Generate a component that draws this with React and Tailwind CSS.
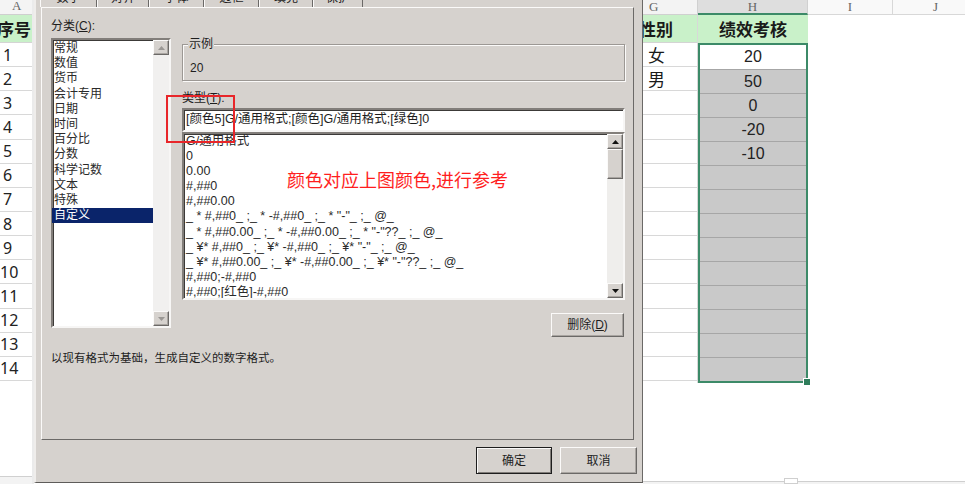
import React from 'react';

const categories = ['常规', '数值', '货币', '会计专用', '日期', '时间', '百分比', '分数', '科学记数', '文本', '特殊', '自定义'];

const formats = [
  'G/通用格式',
  '0',
  '0.00',
  '#,##0',
  '#,##0.00',
  '_ * #,##0_ ;_ * -#,##0_ ;_ * "-"_ ;_ @_',
  '_ * #,##0.00_ ;_ * -#,##0.00_ ;_ * "-"??_ ;_ @_',
  '_ ¥* #,##0_ ;_ ¥* -#,##0_ ;_ ¥* "-"_ ;_ @_',
  '_ ¥* #,##0.00_ ;_ ¥* -#,##0.00_ ;_ ¥* "-"??_ ;_ @_',
  '#,##0;-#,##0',
  '#,##0;[红色]-#,##0',
];

const tabs = [
  ['数字', 'w-[57px]'],
  ['对齐', 'w-[52px]'],
  ['字体', 'w-[55px]'],
  ['边框', 'w-[55px]'],
  ['填充', 'w-[54px]'],
  ['保护', 'w-[50px]'],
];

const scores = ['20', '50', '0', '-20', '-10', '', '', '', '', '', '', '', '', ''];
const genders = ['女', '男', '', '', '', '', '', '', '', '', '', '', '', ''];

const raised =
  'border border-t-[#fbfaf9] border-l-[#fbfaf9] border-r-[#6b6967] border-b-[#6b6967] shadow-[inset_-1px_-1px_0_#a9a5a1]';
const sunken =
  'border-2 border-t-[#827e7a] border-l-[#827e7a] border-r-[#f7f6f5] border-b-[#f7f6f5] shadow-[inset_1px_1px_0_#3c3a38]';

const Arrow = ({ down, color }) => (
  <svg width="7" height="4" viewBox="0 0 7 4">
    <path d={down ? 'M0 0L7 0L3.5 4Z' : 'M0 4L3.5 0L7 4Z'} fill={color} />
  </svg>
);

const ScrollBtn = ({ down, color }) => (
  <div className={`flex h-[15px] w-full shrink-0 items-center justify-center bg-[#d6d2ce] ${raised}`}>
    <Arrow down={down} color={color} />
  </div>
);

const LeftSheet = () => (
  <div className="flex w-[34px] shrink-0 flex-col border-r-2 border-[#ebebeb]">
    <div className="h-[15px] border-b border-[#cfcfcf] bg-[#f4f4f4] pl-[12px] font-['Liberation_Serif',serif] text-[13px] leading-[12px] text-[#666]">
      A
    </div>
    <div className="flex h-[28px] items-center overflow-hidden border-b border-[#d4d4d4] bg-[#c9f1c9]">
      <span className="-ml-[3px] whitespace-nowrap font-['Noto_Sans_CJK_SC',sans-serif] text-[17px] font-bold leading-none text-[#1a1a1a]">
        序号
      </span>
    </div>
    {scores.map((_, i) => (
      <div key={i} className="flex h-[24.15px] items-center border-b border-[#d8d8d8] text-[16px] text-[#222]">
        <span className="w-[15px] text-center">{i + 1}</span>
      </div>
    ))}
    <div className="flex-1" />
    <div className="h-[8px] border-t border-[#d0d0d0] bg-[#f3f3f3]" />
  </div>
);

const Dialog = () => (
  <div className="flex h-[483px] w-[609px] shrink-0 flex-col border-b border-l-2 border-r border-b-[#5e5c5a] border-l-[#efedeb] border-r-[#6b6967] bg-[#d6d2ce] font-['Liberation_Sans','Noto_Sans_CJK_SC',sans-serif] text-[12px] text-[#1e1e1e]">
    {/* tabs, mostly above the visible area */}
    <div className="-mt-[15px] flex h-[22px] pl-[4px]">
      {tabs.map(([t, w]) => (
        <div
          key={t}
          className={`flex ${w} items-end justify-center border-l border-r border-t border-l-[#fbfaf9] border-r-[#6b6967] border-t-[#fbfaf9] pb-[3px] leading-[12px]`}
        >
          {t}
        </div>
      ))}
    </div>

    {/* tab panel */}
    <div className="ml-[5px] flex h-[433px] w-[593px] flex-col border border-b-[#6b6967] border-l-[#fbfaf9] border-r-[#6b6967] border-t-[#fbfaf9] pl-[9px] pt-[12px]">
      <div className="flex items-start gap-[11px]">
        {/* categories */}
        <div className="flex w-[120px] flex-col">
          <div className="h-[12px] leading-[12px]">
            分类(<span className="underline">C</span>):
          </div>
          <div className={`mt-[6px] flex h-[290px] bg-white ${sunken}`}>
            <div className="flex-1 pt-[1px]">
              {categories.map((c) => (
                <div
                  key={c}
                  className={`-ml-[1px] h-[15.2px] pl-[2px] leading-[15px] ${
                    c === '自定义' ? 'bg-[#0a246a] text-white' : 'text-[#2a2a2a]'
                  }`}
                >
                  {c}
                </div>
              ))}
            </div>
            <div className="flex w-[16px] flex-col bg-[#f1f0ef]">
              <ScrollBtn color="#9a9794" />
              <div className="flex-1" />
              <ScrollBtn down color="#9a9794" />
            </div>
          </div>
        </div>

        {/* right side */}
        <div className="flex w-[443px] flex-col">
          <div className="relative mt-[24px] h-[37px] border border-[#9c9894] pl-[7px] pt-[17px] leading-[12px] shadow-[1px_1px_0_#fbfaf9,inset_1px_1px_0_#fbfaf9]">
            <span className="absolute -top-[7px] left-[5px] bg-[#d6d2ce] px-[1px] leading-[12px]">示例</span>
            20
          </div>
          <div className="mt-[11px] h-[12px] leading-[12px]">
            类型(<span className="underline">T</span>):
          </div>
          <div className={`mt-[4px] h-[24px] bg-white pl-[2px] text-[12.5px] leading-[19px] ${sunken}`}>
            [颜色5]G/通用格式;[颜色]G/通用格式;[绿色]0
          </div>
          <div className={`relative flex h-[168px] bg-white ${sunken}`}>
            <div className="flex-1 overflow-hidden pl-[2px] text-[12.5px] text-[#2a2a2a]">
              {formats.map((f) => (
                <div key={f} className="h-[15.1px] whitespace-pre leading-[15px]">
                  {f}
                </div>
              ))}
            </div>
            <div className="flex w-[16px] flex-col bg-[#efeeec]">
              <ScrollBtn color="#111" />
              <div className={`h-[30px] shrink-0 bg-[#d6d2ce] ${raised}`} />
              <div className="flex-1" />
              <ScrollBtn down color="#111" />
            </div>
            <span className="absolute left-[103px] top-[35px] whitespace-nowrap font-['Noto_Sans_CJK_SC',sans-serif] text-[18px] leading-[20px] text-[#ff1e1e]">
              颜色对应上图颜色,进行参考
            </span>
          </div>
          <button
            className={`mr-[1px] mt-[13px] h-[24px] w-[73px] self-end bg-[#d6d2ce] text-[12px] ${raised}`}
          >
            删除(<span className="underline">D</span>)
          </button>
        </div>
      </div>
      <div className="mt-[15px] text-[11.5px] leading-[12px]">以现有格式为基础，生成自定义的数字格式。</div>
    </div>

    {/* buttons */}
    <div className="mt-[7px] flex justify-end gap-[8px] pr-[5px]">
      <button className="h-[27px] w-[76px] border border-[#1e1e1e] bg-[#d6d2ce] text-[12px] shadow-[inset_1px_1px_0_#fbfaf9,inset_-1px_-1px_0_#807c78]">
        确定
      </button>
      <button className={`h-[27px] w-[77px] bg-[#d6d2ce] text-[12px] ${raised}`}>取消</button>
    </div>
  </div>
);

const RightSheet = () => (
  <div className="flex flex-1 flex-col font-['Liberation_Sans','Noto_Sans_CJK_SC',sans-serif]">
    <div className="flex h-[15px] font-['Liberation_Serif',serif] text-[13px] leading-[13px] text-[#666]">
      <div className="w-[55px] border-b border-r border-[#d0d0d0] bg-[#f3f3f3] pl-[6px]">G</div>
      <div className="w-[110px] border-b-2 border-r border-b-[#3c8a68] border-r-[#d0d0d0] bg-[#dedede] text-center">H</div>
      <div className="w-[85px] border-b border-r border-[#d8d8d8] bg-[#f9f9f9] text-center">I</div>
      <div className="flex-1 border-b border-[#d8d8d8] bg-[#f9f9f9] pl-[40px]">J</div>
    </div>
    <div className="flex">
      <div className="flex w-[55px] flex-col border-r border-[#d8d8d8]">
        <div className="flex h-[28px] items-center overflow-hidden border-b border-[#d4d4d4] bg-[#c9f1c9]">
          <span className="-ml-[4px] whitespace-nowrap font-['Noto_Sans_CJK_SC',sans-serif] text-[17px] font-bold leading-none text-[#1a1a1a]">
            性别
          </span>
        </div>
        {genders.map((g, i) => (
          <div
            key={i}
            className="flex h-[24.15px] items-center border-b border-[#d8d8d8] pl-[5px] font-['Noto_Sans_CJK_SC',sans-serif] text-[17px] text-[#1a1a1a]"
          >
            {g}
          </div>
        ))}
      </div>
      <div className="flex w-[110px] flex-col">
        <div className="flex h-[28px] items-center justify-center bg-[#c9f1c9] font-['Noto_Sans_CJK_SC',sans-serif] text-[17px] font-bold text-[#1a1a1a]">
          绩效考核
        </div>
        <div className="relative flex h-[340px] flex-col border-2 border-[#3c8a68]">
          {scores.map((s, i) => (
            <div
              key={i}
              className={`flex h-[24px] items-center justify-center text-[16px] text-[#222] ${
                i === 0 ? 'bg-white' : 'border-t border-[#a6a6a6] bg-[#c9c9c9]'
              }`}
            >
              {s}
            </div>
          ))}
          <div className="absolute -bottom-[4px] -right-[4px] h-[6px] w-[6px] bg-[#2f7d5b] outline outline-1 outline-white" />
        </div>
      </div>
    </div>
    <div className="flex-1" />
    <div className="flex h-[3px] border-t border-[#cfcfcf] bg-[#f3f3f3] pl-[141px]">
      <div className="-mt-[4px] h-[6px] w-[14px] border border-[#cfcfcf] bg-white" />
    </div>
  </div>
);

export default function App() {
  return (
    <div className="relative flex h-[484px] w-[965px] overflow-hidden bg-white">
      <LeftSheet />
      <Dialog />
      <RightSheet />
      <div className="absolute left-[166px] top-[95px] h-[48px] w-[69px] border-2 border-[#e8262a]" />
    </div>
  );
}
